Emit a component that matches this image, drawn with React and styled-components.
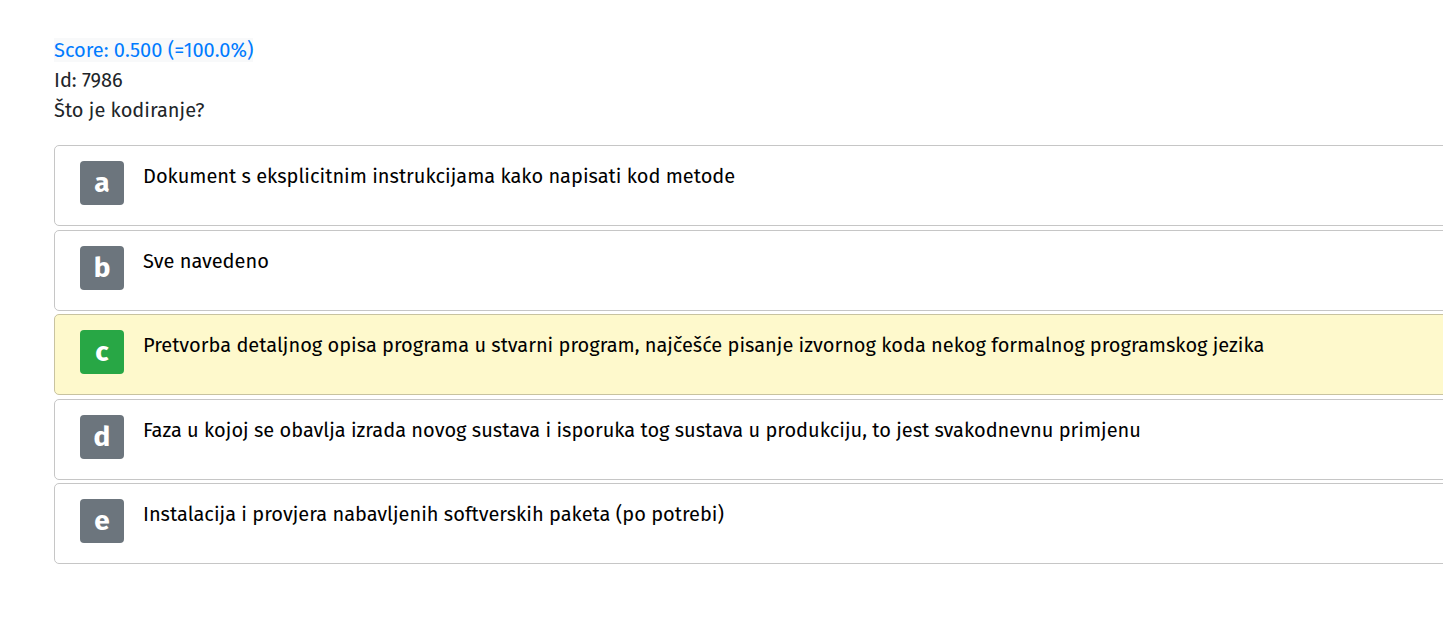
import React from "react";
import styled, { createGlobalStyle } from "styled-components";

const Global = createGlobalStyle`
  html, body { margin: 0; padding: 0; overflow: hidden; background: #fff; }
  body { font-family: "Fira Sans", "Open Sans", sans-serif; color: #212529; }
`;

const Page = styled.div`
  padding: 35px 0 0 54px;
  width: 1420px;
`;

const Info = styled.div`
  font-size: 20px;
  line-height: 30px;
  margin-bottom: 20px;
`;

const Score = styled.span`
  background: #f8f9fa;
  color: #007bff;
`;

const Line = styled.div``;

const List = styled.div`
  display: flex;
  flex-direction: column;
  gap: 3.5px;
`;

const Card = styled.div`
  display: flex;
  align-items: flex-start;
  gap: 19px;
  height: 81px;
  box-sizing: border-box;
  padding: 15px 25px;
  border: 1px solid ${(p) => (p.$correct ? "#c8c3a0" : "#c6c6c6")};
  border-radius: 5px;
  background: ${(p) => (p.$correct ? "#fef9cc" : "#fff")};
`;

const Badge = styled.div`
  flex: none;
  width: 44px;
  height: 44px;
  border-radius: 4px;
  background: ${(p) => (p.$correct ? "#28a745" : "#6c757d")};
  color: #fff;
  font-size: 28px;
  font-weight: 700;
  display: flex;
  align-items: center;
  justify-content: center;
  line-height: 1;
`;

const Text = styled.div`
  font-size: 20px;
  line-height: 30px;
  color: #000;
`;

const answers = [
  { l: "a", t: "Dokument s eksplicitnim instrukcijama kako napisati kod metode" },
  { l: "b", t: "Sve navedeno" },
  { l: "c", t: "Pretvorba detaljnog opisa programa u stvarni program, najčešće pisanje izvornog koda nekog formalnog programskog jezika", c: true },
  { l: "d", t: "Faza u kojoj se obavlja izrada novog sustava i isporuka tog sustava u produkciju, to jest svakodnevnu primjenu" },
  { l: "e", t: "Instalacija i provjera nabavljenih softverskih paketa (po potrebi)" },
];

export default function App() {
  return (
    <>
      <Global />
      <Page>
        <Info>
          <Line><Score>Score: 0.500 (=100.0%)</Score></Line>
          <Line>Id: 7986</Line>
          <Line>Što je kodiranje?</Line>
        </Info>
        <List>
          {answers.map((a) => (
            <Card key={a.l} $correct={a.c}>
              <Badge $correct={a.c}>{a.l}</Badge>
              <Text>{a.t}</Text>
            </Card>
          ))}
        </List>
      </Page>
    </>
  );
}
